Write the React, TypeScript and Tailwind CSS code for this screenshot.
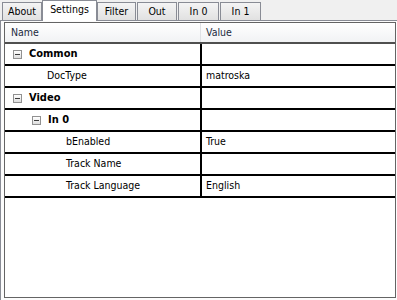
import React from 'react';

type Row = {
  label: string;
  value?: string;
  group?: boolean;
  indent: string;
};

const ROWS: Row[] = [
  { label: 'Common', group: true, indent: 'pl-[8px]' },
  { label: 'DocType', value: 'matroska', indent: 'pl-[42px]' },
  { label: 'Video', group: true, indent: 'pl-[8px]' },
  { label: 'In 0', group: true, indent: 'pl-[27px]' },
  { label: 'bEnabled', value: 'True', indent: 'pl-[61px]' },
  { label: 'Track Name', value: '', indent: 'pl-[61px]' },
  { label: 'Track Language', value: 'English', indent: 'pl-[61px]' },
];

const TABS = [
  { label: 'About', cls: 'ml-[2px] w-[40px]' },
  { label: 'Settings', cls: 'w-[55px]', active: true },
  { label: 'Filter', cls: 'w-[39px]' },
  { label: 'Out', cls: 'ml-px w-[40px]' },
  { label: 'In 0', cls: 'ml-px w-[41px]' },
  { label: 'In 1', cls: 'ml-px w-[41px]' },
];

const Expander = () => (
  <span className="flex h-[9px] w-[9px] shrink-0 items-center justify-center border border-[#919191] bg-gradient-to-b from-white to-[#dedede]">
    <span className="h-px w-[5px] bg-[#3c3c3c]" />
  </span>
);

export default function App() {
  return (
    <div className="flex h-[300px] w-[397px] flex-col overflow-hidden bg-[#f0f0f0] font-['DejaVu_Sans_Condensed','Liberation_Sans',sans-serif] text-[10.5px] text-black">
      {/* tab strip */}
      <div className="relative z-10 flex h-[20px] items-end">
        {TABS.map((t) =>
          t.active ? (
            <div
              key={t.label}
              className={`${t.cls} -mb-px flex h-[21px] items-center justify-center border border-b-0 border-[#898c95] bg-white pb-[2px]`}
            >
              {t.label}
            </div>
          ) : (
            <div
              key={t.label}
              className={`${t.cls} flex h-[18px] items-center justify-center border border-b-0 border-[#898c95] bg-gradient-to-b from-[#f4f4f4] to-[#e1e1e1]`}
            >
              {t.label}
            </div>
          )
        )}
      </div>

      {/* tab page */}
      <div className="flex-1 border border-r-0 border-b-0 border-[#898c95] bg-[#fcfcfc] pl-[3px] pt-px">
        <div className="flex h-[276px] w-[392px] flex-col border border-[#646464] bg-white">
          {/* header */}
          <div className="flex h-[21px] border-b-2 border-[#4f4f4f] bg-gradient-to-b from-white to-[#f1f2f4] text-[#1b2a40]">
            <div className="flex w-[196px] items-center border-r border-[#dfe1e5] pl-[6px]">Name</div>
            <div className="flex flex-1 items-center pl-[5px]">Value</div>
          </div>

          {ROWS.map((r) => (
            <div key={r.label} className="flex h-[22px] border-b-2 border-black">
              <div className={`flex w-[197px] items-center border-r-2 border-black ${r.indent}`}>
                {r.group ? (
                  <>
                    <Expander />
                    <span className="ml-[7px] text-[11px] font-bold">{r.label}</span>
                  </>
                ) : (
                  <span>{r.label}</span>
                )}
              </div>
              <div className="flex flex-1 items-center pl-[4px]">{r.value}</div>
            </div>
          ))}
        </div>
      </div>
    </div>
  );
}
